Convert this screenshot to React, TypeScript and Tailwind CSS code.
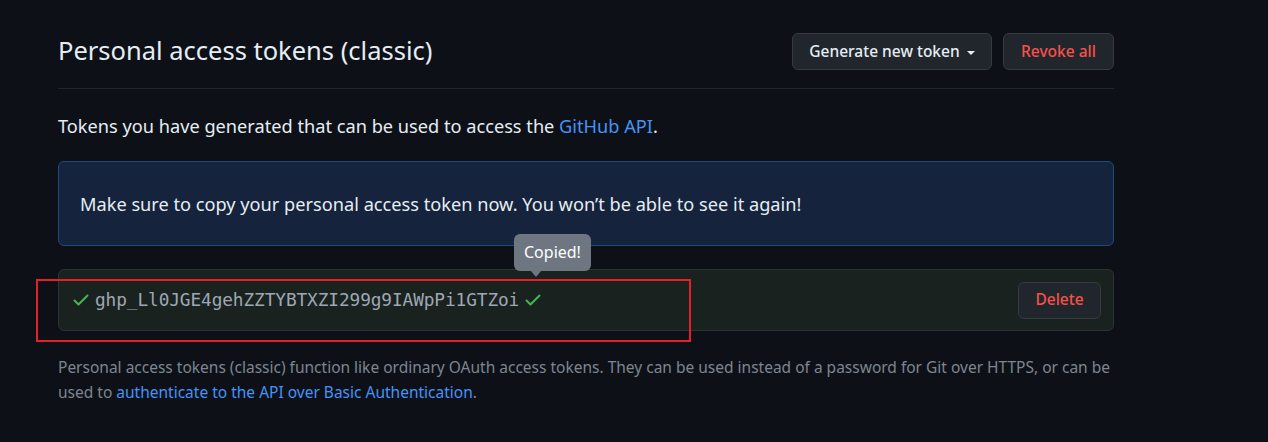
import { useState } from 'react'

function CheckIcon({ className }: { className?: string }) {
  return (
    <svg viewBox="0 0 18 18" width="18" height="18" fill="none" className={className}>
      <path d="M2.5 9.5 L6.5 13.5 L15.5 4.5" stroke="currentColor" strokeWidth="2" strokeLinecap="round" strokeLinejoin="round" />
    </svg>
  )
}

export default function App() {
  const [token] = useState('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')

  return (
    <div className="min-h-[442px] w-full bg-[#0d1117] font-['Noto_Sans',sans-serif] text-[#e6edf3]">
      <div className="ml-[58px] w-[1056px] pt-[33px]">
        <div className="flex items-center justify-between border-b border-[#21262d] pb-[18px]">
          <h2 className="-mt-[2px] text-[25.5px] leading-[37px] font-normal text-[#e6edf3]">
            Personal access tokens (classic)
          </h2>
          <div className="flex gap-[11px]">
            <button className="flex h-[37px] w-[200px] items-center justify-center gap-[7px] rounded-[6px] border border-[#363b42] bg-[#21262d] text-[15.5px] font-medium text-[#e6edf3]">
              Generate new token
              <span className="mt-[2px] inline-block h-0 w-0 border-x-[4px] border-t-[4px] border-x-transparent border-t-[#e6edf3]" />
            </button>
            <button className="flex h-[37px] w-[111px] items-center justify-center rounded-[6px] border border-[#363b42] bg-[#21262d] text-[15.5px] font-medium text-[#f85149]">
              Revoke all
            </button>
          </div>
        </div>

        <p className="mt-[25px] text-[18.2px] leading-[24px] text-[#e6edf3]">
          Tokens you have generated that can be used to access the{' '}
          <a className="text-[#4493f8]">GitHub API</a>.
        </p>

        <div className="mt-[23px] flex h-[85px] items-center rounded-[6px] border border-[#1f4a80] bg-[#15233c] px-[21px] pt-[2px] text-[18.2px] text-[#e6edf3]">
          Make sure to copy your personal access token now. You won’t be able to see it again!
        </div>

        <div className="relative mt-[23px] flex h-[62px] items-center justify-between rounded-[6px] border border-[#2b3530] bg-[#1a221f] pl-[13px] pr-[12px]">
          <div className="flex items-center gap-[5px]">
            <CheckIcon className="text-[#3fb950]" />
            <code className="font-['DejaVu_Sans_Mono',monospace] text-[17.8px] tracking-[-0.1px] text-[#9ea7b3]">
              {token}
            </code>
            <CheckIcon className="text-[#3fb950]" />
          </div>
          <button className="flex h-[37px] w-[83px] items-center justify-center rounded-[6px] border border-[#363b42] bg-[#21262d] text-[15.5px] font-medium text-[#f85149]">
            Delete
          </button>

          <div className="absolute left-[455px] top-[-36px] rounded-[6px] bg-[#6e7681] px-[10px] py-[7px] text-[16px] leading-[23px] text-white">
            Copied!
            <span className="absolute bottom-[-6px] left-[17px] h-0 w-0 border-x-[5px] border-t-[6px] border-x-transparent border-t-[#6e7681]" />
          </div>

          <div className="pointer-events-none absolute left-[-23px] top-[9px] h-[63px] w-[655px] border-2 border-[#e5202a]" />
        </div>

        <p className="mt-[24px] text-[15.5px] leading-[25px] text-[#7d8590]">
          Personal access tokens (classic) function like ordinary OAuth access tokens. They can be used instead of a password for Git over HTTPS, or can be used to{' '}
          <a className="text-[#4493f8]">authenticate to the API over Basic Authentication</a>.
        </p>
      </div>
    </div>
  )
}
